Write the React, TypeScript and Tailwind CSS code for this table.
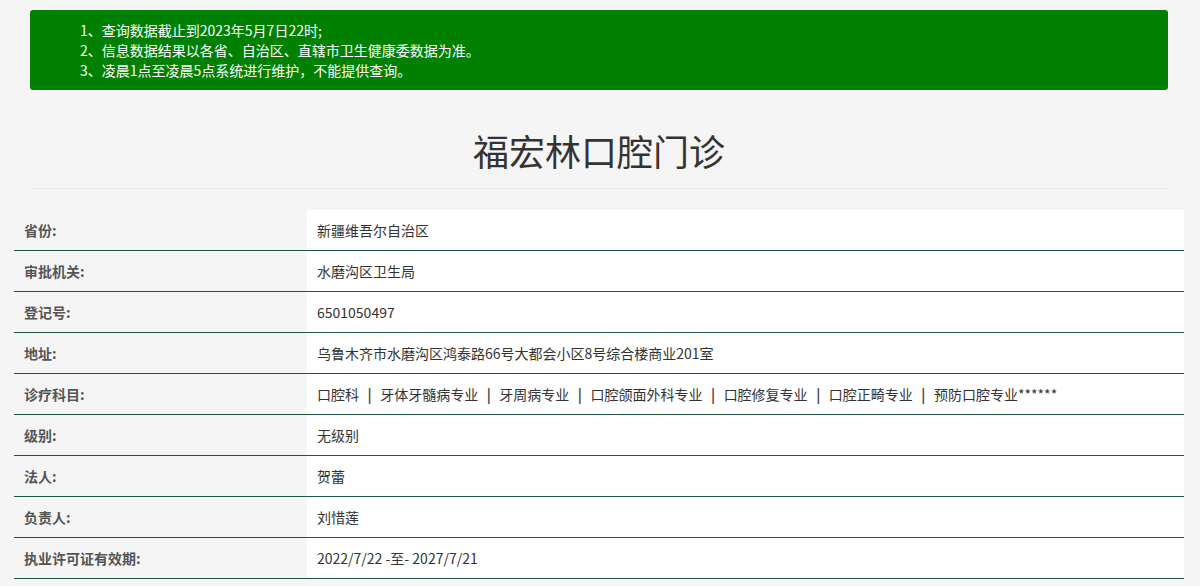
import React from "react";

const rows: { label: string; value: React.ReactNode }[] = [
  { label: "省份:", value: "新疆维吾尔自治区" },
  { label: "审批机关:", value: "水磨沟区卫生局" },
  { label: "登记号:", value: "6501050497" },
  { label: "地址:", value: "乌鲁木齐市水磨沟区鸿泰路66号大都会小区8号综合楼商业201室" },
  { label: "诊疗科目:", value: "SUBJECTS" },
  { label: "级别:", value: "无级别" },
  { label: "法人:", value: "贺蕾" },
  { label: "负责人:", value: "刘惜莲" },
  { label: "执业许可证有效期:", value: "2022/7/22 -至- 2027/7/21" },
];

const subjects = ["口腔科", "牙体牙髓病专业", "牙周病专业", "口腔颌面外科专业", "口腔修复专业", "口腔正畸专业", "预防口腔专业******"];

function Subjects() {
  return (
    <span>
      {subjects.map((s, i) => (
        <React.Fragment key={i}>
          {i > 0 && <span className="mx-[8.5px] font-bold text-[#444]">|</span>}
          {s}
        </React.Fragment>
      ))}
    </span>
  );
}

export default function App() {
  return (
    <div
      className="min-h-[586px] bg-[#f5f5f5] text-[14px] text-[#333]"
      style={{ fontFamily: '"Microsoft YaHei", "Noto Sans CJK SC", "Noto Sans", sans-serif' }}
    >
      <div className="mx-auto w-[1170px] pt-[10px]">
        <div className="pl-[15px] pr-[17px]">
          <div className="h-[80px] rounded-[3px] bg-[#008000] pl-[50px] pt-[10px] text-[14px] leading-[20px] text-white">
            <div>1、查询数据截止到2023年5月7日22时;</div>
            <div>2、信息数据结果以各省、自治区、直辖市卫生健康委数据为准。</div>
            <div>3、凌晨1点至凌晨5点系统进行维护，不能提供查询。</div>
          </div>
          <div className="flex h-[99px] items-end justify-center border-b border-[#e8e8e8] pb-[16px]">
            <h1 className="text-[36px] font-normal leading-[44px] text-[#333]">福宏林口腔门诊</h1>
          </div>
        </div>
        <div className="mt-[21px] ml-[-1px] w-[1170px]">
          {rows.map((r, i) => (
            <div key={i} className="flex h-[41px] border-b border-[#1f5640]">
              <div className="flex w-[293px] items-center pl-[10px] font-bold text-[#555]">{r.label}</div>
              <div className="flex flex-1 items-center bg-white pl-[10px] text-[#333]">
                {r.value === "SUBJECTS" ? <Subjects /> : r.value}
              </div>
            </div>
          ))}
        </div>
      </div>
    </div>
  );
}
